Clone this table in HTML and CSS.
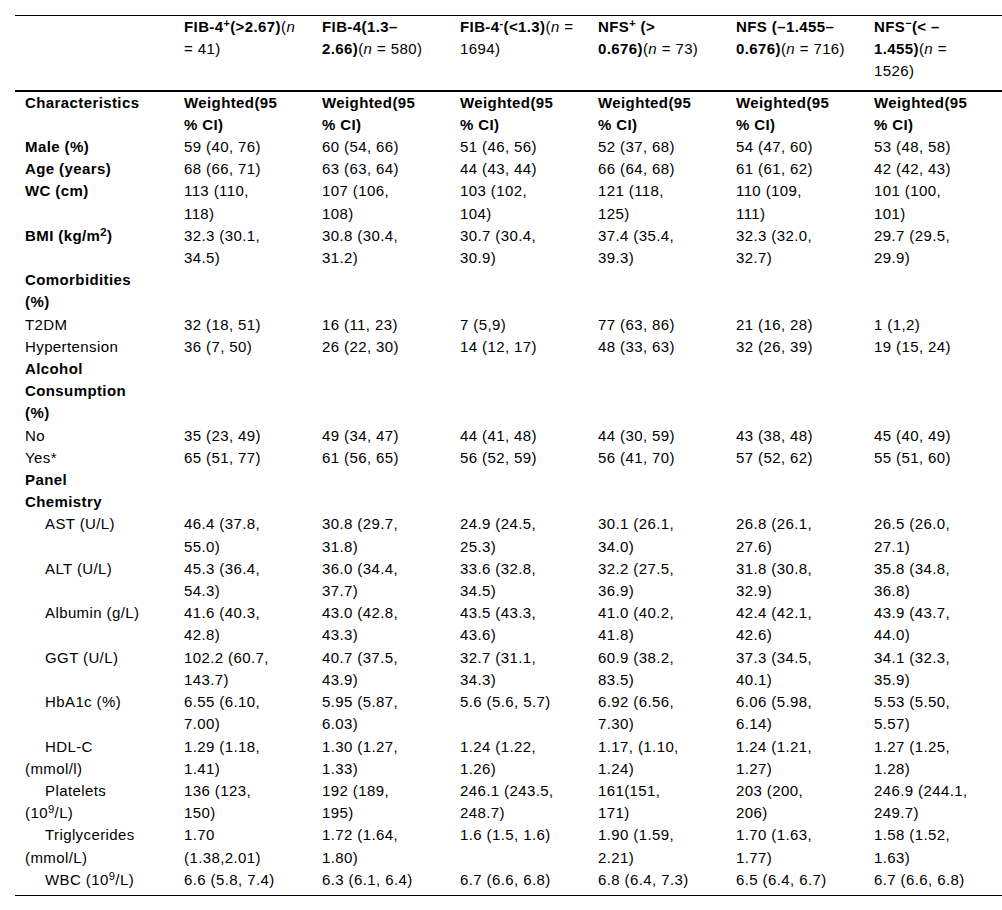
FILE: index.html
```html
<!DOCTYPE html>
<html lang="en">
<head>
<meta charset="utf-8">
<title>Weighted characteristics by FIB-4 and NFS</title>
<link rel="stylesheet" href="styles.css">
</head>
<body>
<table class="data-table">
  <colgroup>
    <col class="col-label">
    <col class="col-value"><col class="col-value"><col class="col-value">
    <col class="col-value"><col class="col-value"><col class="col-value">
  </colgroup>
  <thead>
    <tr class="head-row">
      <th></th>
      <th><b>FIB-4<sup>+</sup>(&gt;2.67)</b>(<i>n</i><br>= 41)</th>
      <th><b>FIB-4(1.3–<br>2.66)</b>(<i>n</i> = 580)</th>
      <th><b>FIB-4<sup>-</sup>(&lt;1.3)</b>(<i>n</i> =<br>1694)</th>
      <th><b>NFS<sup>+</sup> (&gt;<br>0.676)</b>(<i>n</i> = 73)</th>
      <th><b>NFS (–1.455–<br>0.676)</b>(<i>n</i> = 716)</th>
      <th><b>NFS<sup>−</sup>(&lt; –<br>1.455)</b>(<i>n</i> =<br>1526)</th>
    </tr>
  </thead>
  <tbody>
    <tr class="bold-row">
      <td>Characteristics</td>
      <td>Weighted(95<br>% CI)</td><td>Weighted(95<br>% CI)</td><td>Weighted(95<br>% CI)</td>
      <td>Weighted(95<br>% CI)</td><td>Weighted(95<br>% CI)</td><td>Weighted(95<br>% CI)</td>
    </tr>
    <tr>
      <td class="lbl-bold">Male (%)</td>
      <td>59 (40, 76)</td><td>60 (54, 66)</td><td>51 (46, 56)</td><td>52 (37, 68)</td><td>54 (47, 60)</td><td>53 (48, 58)</td>
    </tr>
    <tr>
      <td class="lbl-bold">Age (years)</td>
      <td>68 (66, 71)</td><td>63 (63, 64)</td><td>44 (43, 44)</td><td>66 (64, 68)</td><td>61 (61, 62)</td><td>42 (42, 43)</td>
    </tr>
    <tr>
      <td class="lbl-bold">WC (cm)</td>
      <td>113 (110,<br>118)</td><td>107 (106,<br>108)</td><td>103 (102,<br>104)</td><td>121 (118,<br>125)</td><td>110 (109,<br>111)</td><td>101 (100,<br>101)</td>
    </tr>
    <tr>
      <td class="lbl-bold">BMI (kg/m<sup class="num-sup">2</sup>)</td>
      <td>32.3 (30.1,<br>34.5)</td><td>30.8 (30.4,<br>31.2)</td><td>30.7 (30.4,<br>30.9)</td><td>37.4 (35.4,<br>39.3)</td><td>32.3 (32.0,<br>32.7)</td><td>29.7 (29.5,<br>29.9)</td>
    </tr>
    <tr>
      <td class="lbl-bold">Comorbidities<br>(%)</td>
      <td></td><td></td><td></td><td></td><td></td><td></td>
    </tr>
    <tr>
      <td>T2DM</td>
      <td>32 (18, 51)</td><td>16 (11, 23)</td><td>7 (5,9)</td><td>77 (63, 86)</td><td>21 (16, 28)</td><td>1 (1,2)</td>
    </tr>
    <tr>
      <td>Hypertension</td>
      <td>36 (7, 50)</td><td>26 (22, 30)</td><td>14 (12, 17)</td><td>48 (33, 63)</td><td>32 (26, 39)</td><td>19 (15, 24)</td>
    </tr>
    <tr>
      <td class="lbl-bold">Alcohol<br>Consumption<br>(%)</td>
      <td></td><td></td><td></td><td></td><td></td><td></td>
    </tr>
    <tr>
      <td>No</td>
      <td>35 (23, 49)</td><td>49 (34, 47)</td><td>44 (41, 48)</td><td>44 (30, 59)</td><td>43 (38, 48)</td><td>45 (40, 49)</td>
    </tr>
    <tr>
      <td>Yes*</td>
      <td>65 (51, 77)</td><td>61 (56, 65)</td><td>56 (52, 59)</td><td>56 (41, 70)</td><td>57 (52, 62)</td><td>55 (51, 60)</td>
    </tr>
    <tr>
      <td class="lbl-bold">Panel<br>Chemistry</td>
      <td></td><td></td><td></td><td></td><td></td><td></td>
    </tr>
    <tr>
      <td class="lbl-sub">AST (U/L)</td>
      <td>46.4 (37.8,<br>55.0)</td><td>30.8 (29.7,<br>31.8)</td><td>24.9 (24.5,<br>25.3)</td><td>30.1 (26.1,<br>34.0)</td><td>26.8 (26.1,<br>27.6)</td><td>26.5 (26.0,<br>27.1)</td>
    </tr>
    <tr>
      <td class="lbl-sub">ALT (U/L)</td>
      <td>45.3 (36.4,<br>54.3)</td><td>36.0 (34.4,<br>37.7)</td><td>33.6 (32.8,<br>34.5)</td><td>32.2 (27.5,<br>36.9)</td><td>31.8 (30.8,<br>32.9)</td><td>35.8 (34.8,<br>36.8)</td>
    </tr>
    <tr>
      <td class="lbl-sub">Albumin (g/L)</td>
      <td>41.6 (40.3,<br>42.8)</td><td>43.0 (42.8,<br>43.3)</td><td>43.5 (43.3,<br>43.6)</td><td>41.0 (40.2,<br>41.8)</td><td>42.4 (42.1,<br>42.6)</td><td>43.9 (43.7,<br>44.0)</td>
    </tr>
    <tr>
      <td class="lbl-sub">GGT (U/L)</td>
      <td>102.2 (60.7,<br>143.7)</td><td>40.7 (37.5,<br>43.9)</td><td>32.7 (31.1,<br>34.3)</td><td>60.9 (38.2,<br>83.5)</td><td>37.3 (34.5,<br>40.1)</td><td>34.1 (32.3,<br>35.9)</td>
    </tr>
    <tr>
      <td class="lbl-sub">HbA1c (%)</td>
      <td>6.55 (6.10,<br>7.00)</td><td>5.95 (5.87,<br>6.03)</td><td>5.6 (5.6, 5.7)</td><td>6.92 (6.56,<br>7.30)</td><td>6.06 (5.98,<br>6.14)</td><td>5.53 (5.50,<br>5.57)</td>
    </tr>
    <tr>
      <td class="lbl-sub">HDL-C<br>(mmol/l)</td>
      <td>1.29 (1.18,<br>1.41)</td><td>1.30 (1.27,<br>1.33)</td><td>1.24 (1.22,<br>1.26)</td><td>1.17, (1.10,<br>1.24)</td><td>1.24 (1.21,<br>1.27)</td><td>1.27 (1.25,<br>1.28)</td>
    </tr>
    <tr>
      <td class="lbl-sub">Platelets<br>(10<sup class="num-sup">9</sup>/L)</td>
      <td>136 (123,<br>150)</td><td>192 (189,<br>195)</td><td>246.1 (243.5,<br>248.7)</td><td>161(151,<br>171)</td><td>203 (200,<br>206)</td><td>246.9 (244.1,<br>249.7)</td>
    </tr>
    <tr>
      <td class="lbl-sub">Triglycerides<br>(mmol/L)</td>
      <td>1.70<br>(1.38,2.01)</td><td>1.72 (1.64,<br>1.80)</td><td>1.6 (1.5, 1.6)</td><td>1.90 (1.59,<br>2.21)</td><td>1.70 (1.63,<br>1.77)</td><td>1.58 (1.52,<br>1.63)</td>
    </tr>
    <tr class="last-row">
      <td class="lbl-sub">WBC (10<sup class="num-sup">9</sup>/L)</td>
      <td>6.6 (5.8, 7.4)</td><td>6.3 (6.1, 6.4)</td><td>6.7 (6.6, 6.8)</td><td>6.8 (6.4, 7.3)</td><td>6.5 (6.4, 6.7)</td><td>6.7 (6.6, 6.8)</td>
    </tr>
  </tbody>
</table>
</body>
</html>
```

FILE: styles.css
```css
html, body {
  background: #ffffff;
}

body {
  margin: 15px 0 0 15px;
  color: #000000;
  font-family: "Liberation Sans", Arial, Helvetica, sans-serif;
  font-size: 15px;
  letter-spacing: 0.4px;
  line-height: 22.2px;
}

.data-table {
  width: 987px;
  table-layout: fixed;
  border-collapse: collapse;
  border-top: 1px solid #000;
  border-bottom: 1px solid #000;
}

.col-label {
  width: 159px;
}

.col-value {
  width: 138px;
}

.data-table th,
.data-table td {
  padding: 0 4px 0 10px;
  text-align: left;
  vertical-align: top;
  white-space: nowrap;
}

.data-table th {
  font-weight: normal;
  padding-bottom: 7px;
  border-bottom: 2px solid #000;
}

.data-table b {
  font-weight: bold;
}

.data-table i {
  font-style: italic;
}

sup {
  font-size: 0.72em;
  line-height: 0;
  vertical-align: 0.45em;
}

.num-sup {
  font-size: 0.75em;
}

.bold-row td,
.lbl-bold {
  font-weight: bold;
}

.lbl-sub {
  text-indent: 20px;
}

.last-row td {
  padding-bottom: 4px;
}
```
